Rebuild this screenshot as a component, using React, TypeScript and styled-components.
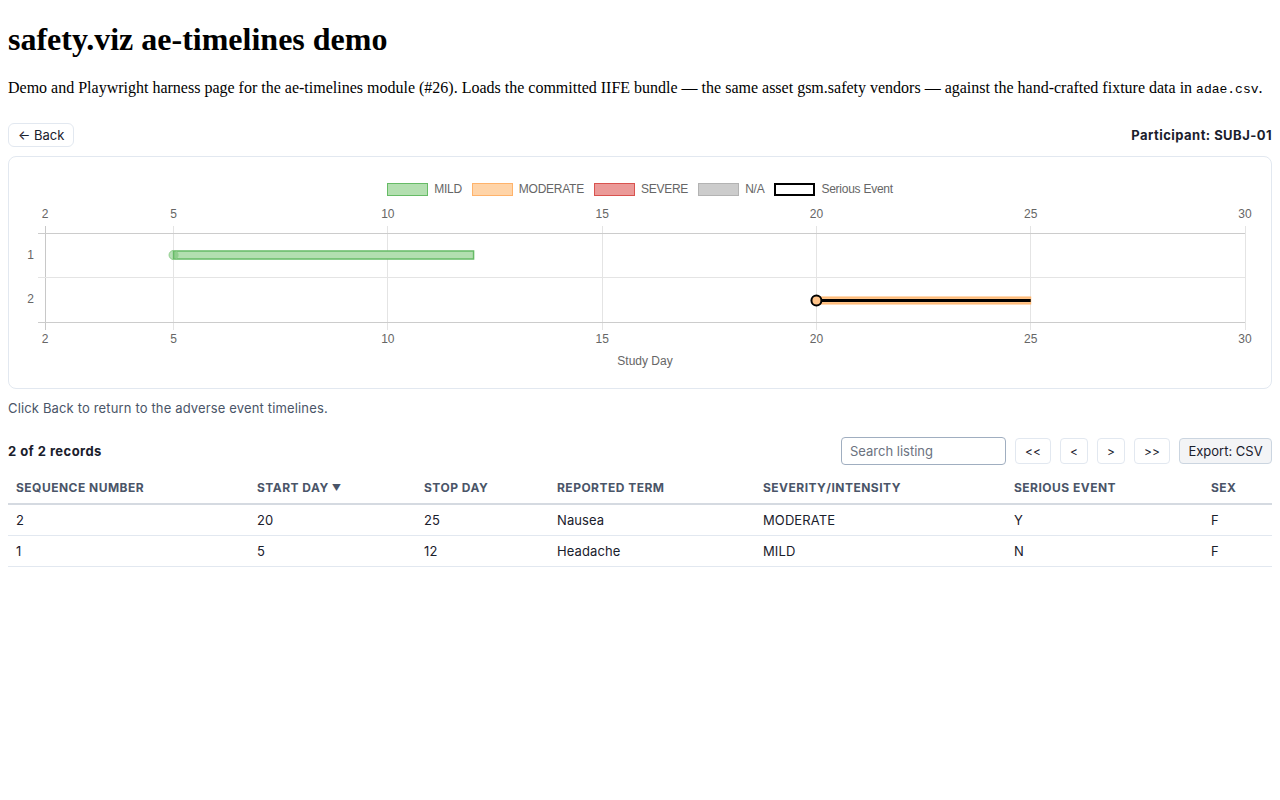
import React from 'react'
import styled, { createGlobalStyle } from 'styled-components'

const GlobalStyle = createGlobalStyle`
  body {
    margin: 8px;
    font-family: 'Liberation Serif', serif;
    background: #ffffff;
    color: #000000;
  }
  code {
    font-family: 'Liberation Mono', monospace;
    font-size: 13px;
  }
`

const UI_FONT = `Inter, 'Liberation Sans', sans-serif`
const CHART_FONT = `'Liberation Sans', Arial, sans-serif`

const Title = styled.h1`
  margin: 13px 0 21px;
  font-size: 32px;
`

const Intro = styled.p`
  margin: 0 0 26px;
`

const Header = styled.div`
  display: flex;
  justify-content: space-between;
  align-items: center;
  height: 24px;
  font-family: ${UI_FONT};
`

const BackButton = styled.button`
  height: 24px;
  padding: 0 9px;
  background: #ffffff;
  border: 1px solid #e2e8f0;
  border-radius: 6px;
  font-family: ${UI_FONT};
  font-size: 13px;
  color: #1a202c;
  cursor: pointer;
`

const Participant = styled.div`
  font-size: 13px;
  font-weight: 700;
  letter-spacing: 0.45px;
  color: #1a202c;
`

const ChartCard = styled.div`
  margin-top: 9px;
  border: 1px solid #e2e8f0;
  border-radius: 8px;
  padding-top: 25px;
  font-family: ${CHART_FONT};
`

const Legend = styled.div`
  display: flex;
  justify-content: center;
  align-items: center;
  height: 14px;
  gap: 10px;
`

const LegendItem = styled.div`
  display: flex;
  align-items: center;
  gap: 6px;
  font-size: 12px;
  letter-spacing: -0.25px;
  color: #666666;
`

const Swatch = styled.span<{ $fill: string; $stroke: string; $weight?: number }>`
  box-sizing: border-box;
  width: 41px;
  height: 13px;
  background: ${p => p.$fill};
  border: ${p => p.$weight ?? 1}px solid ${p => p.$stroke};
`

const Caption = styled.div`
  margin-top: 10px;
  line-height: 18px;
  font-family: ${UI_FONT};
  font-size: 13px;
  letter-spacing: 0.15px;
  color: #4a5568;
`

const Toolbar = styled.div`
  margin-top: 20px;
  display: flex;
  align-items: center;
  justify-content: space-between;
  height: 28px;
  font-family: ${UI_FONT};
`

const RecordCount = styled.div`
  font-size: 13px;
  font-weight: 700;
  letter-spacing: 0.45px;
  color: #1a202c;
`

const Controls = styled.div`
  display: flex;
  align-items: center;
  gap: 9px;
`

const Search = styled.input`
  box-sizing: border-box;
  width: 165px;
  height: 28px;
  padding: 0 8px;
  border: 1px solid #a0aec0;
  border-radius: 4px;
  font-family: ${UI_FONT};
  font-size: 13px;
  color: #1a202c;
  &::placeholder {
    color: #6b7280;
  }
`

const PageButton = styled.button<{ $wide?: boolean }>`
  box-sizing: border-box;
  height: 26px;
  min-width: ${p => (p.$wide ? 36 : 28)}px;
  padding: 0 9px;
  background: #ffffff;
  border: 1px solid #e2e8f0;
  border-radius: 4px;
  font-family: ${UI_FONT};
  font-size: 12px;
  color: #1a202c;
`

const ExportButton = styled.button`
  box-sizing: border-box;
  width: 93px;
  height: 26px;
  padding: 0;
  background: #f3f4f6;
  border: 1px solid #cbd5e0;
  border-radius: 4px;
  font-family: ${UI_FONT};
  font-size: 13px;
  color: #1a202c;
`

const Table = styled.table`
  margin-top: 7px;
  width: 100%;
  border-collapse: collapse;
  table-layout: fixed;
  font-family: ${UI_FONT};
`

const Th = styled.th`
  padding: 8px 8px 7px;
  line-height: 16px;
  text-align: left;
  font-size: 12px;
  font-weight: 700;
  letter-spacing: 0.04em;
  text-transform: uppercase;
  color: #4a5568;
  border-bottom: 2px solid #d5dae1;
  white-space: nowrap;
`

const SortMark = styled.span`
  font-size: 9px;
  margin-left: 3px;
  vertical-align: 1px;
`

const Td = styled.td`
  padding: 7px 8px;
  line-height: 16px;
  font-size: 13px;
  letter-spacing: 0.1px;
  color: #1a202c;
  border-bottom: 1px solid #e2e8f0;
`

const severityStyles = {
  MILD: { fill: '#b3dfb0', stroke: '#66bb66' },
  MODERATE: { fill: '#ffd4a8', stroke: '#ffb36b' },
  SEVERE: { fill: '#eb9a98', stroke: '#d9534f' },
  'N/A': { fill: '#cccccc', stroke: '#b3b3b3' },
}

const records = [
  { seq: 2, start: 20, stop: 25, term: 'Nausea', sev: 'MODERATE', serious: 'Y', sex: 'F' },
  { seq: 1, start: 5, stop: 12, term: 'Headache', sev: 'MILD', serious: 'N', sex: 'F' },
]

const columns = [
  { label: 'Sequence Number', width: 241 },
  { label: 'Start Day', width: 167, sorted: true },
  { label: 'Stop Day', width: 133 },
  { label: 'Reported Term', width: 206 },
  { label: 'Severity/Intensity', width: 251 },
  { label: 'Serious Event', width: 197 },
  { label: 'Sex', width: 69 },
]

// chart geometry, in svg units
const X0 = 36
const DAY = 1200 / 28
const dayX = (d: number) => X0 + (d - 2) * DAY
const TICKS = [2, 5, 10, 15, 20, 25, 30]
const TOP = 37
const MID = 81
const BOTTOM = 126

const Timeline: React.FC = () => (
  <svg width="1262" height="192" viewBox="0 0 1262 192" style={{ display: 'block' }}>
    {TICKS.map(t => (
      <line
        key={t}
        x1={dayX(t)}
        x2={dayX(t)}
        y1={30}
        y2={134}
        stroke={t === 2 ? '#c8c8c8' : '#e4e4e4'}
        strokeWidth={1}
        shapeRendering="crispEdges"
      />
    ))}
    <line x1={29} x2={dayX(30)} y1={TOP} y2={TOP} stroke="#cccccc" shapeRendering="crispEdges" />
    <line x1={29} x2={dayX(30)} y1={MID} y2={MID} stroke="#e4e4e4" shapeRendering="crispEdges" />
    <line x1={29} x2={dayX(30)} y1={BOTTOM} y2={BOTTOM} stroke="#cccccc" shapeRendering="crispEdges" />

    <g fontSize="12" fill="#666666" textAnchor="middle">
      {TICKS.map(t => (
        <React.Fragment key={t}>
          <text x={dayX(t)} y={22}>{t}</text>
          <text x={dayX(t)} y={147}>{t}</text>
        </React.Fragment>
      ))}
      <text x={25} y={63} textAnchor="end">1</text>
      <text x={25} y={107} textAnchor="end">2</text>
      <text x={dayX(16)} y={169}>Study Day</text>
    </g>

    {/* row 1: mild, not serious */}
    <rect x={dayX(5)} y={55} width={dayX(12) - dayX(5)} height={8} fill="#b3dfb0" stroke="#66bb66" strokeWidth={1.5} />
    <circle cx={dayX(5)} cy={59} r={4.5} fill="rgba(102,187,102,0.45)" stroke="#8fcf8c" strokeWidth={1} />

    {/* row 2: moderate, serious */}
    <rect x={dayX(20)} y={101} width={dayX(25) - dayX(20)} height={7} fill="#ffc48a" stroke="#ffb36b" strokeWidth={1} />
    <line x1={dayX(20)} x2={dayX(25)} y1={104.5} y2={104.5} stroke="#000000" strokeWidth={3} />
    <circle cx={dayX(20)} cy={104.5} r={5} fill="#ffc48a" stroke="#000000" strokeWidth={2} />
  </svg>
)

const App: React.FC = () => (
  <>
    <GlobalStyle />
    <Title>safety.viz ae-timelines demo</Title>
    <Intro>
      Demo and Playwright harness page for the ae-timelines module (#26). Loads the committed IIFE bundle — the same
      asset gsm.safety vendors — against the hand-crafted fixture data in <code>adae.csv</code>.
    </Intro>

    <Header>
      <BackButton>← Back</BackButton>
      <Participant>Participant: SUBJ-01</Participant>
    </Header>

    <ChartCard>
      <Legend>
        {Object.entries(severityStyles).map(([name, s]) => (
          <LegendItem key={name}>
            <Swatch $fill={s.fill} $stroke={s.stroke} />
            {name}
          </LegendItem>
        ))}
        <LegendItem>
          <Swatch $fill="#ffffff" $stroke="#000000" $weight={2} />
          Serious Event
        </LegendItem>
      </Legend>
      <Timeline />
    </ChartCard>

    <Caption>Click Back to return to the adverse event timelines.</Caption>

    <Toolbar>
      <RecordCount>2 of 2 records</RecordCount>
      <Controls>
        <Search placeholder="Search listing" />
        <PageButton $wide>&lt;&lt;</PageButton>
        <PageButton>&lt;</PageButton>
        <PageButton>&gt;</PageButton>
        <PageButton $wide>&gt;&gt;</PageButton>
        <ExportButton>Export: CSV</ExportButton>
      </Controls>
    </Toolbar>

    <Table>
      <colgroup>
        {columns.map(c => (
          <col key={c.label} style={{ width: c.width }} />
        ))}
      </colgroup>
      <thead>
        <tr>
          {columns.map(c => (
            <Th key={c.label}>
              {c.label}
              {c.sorted && <SortMark>▼</SortMark>}
            </Th>
          ))}
        </tr>
      </thead>
      <tbody>
        {records.map(r => (
          <tr key={r.seq}>
            <Td>{r.seq}</Td>
            <Td>{r.start}</Td>
            <Td>{r.stop}</Td>
            <Td>{r.term}</Td>
            <Td>{r.sev}</Td>
            <Td>{r.serious}</Td>
            <Td>{r.sex}</Td>
          </tr>
        ))}
      </tbody>
    </Table>
  </>
)

export default App
